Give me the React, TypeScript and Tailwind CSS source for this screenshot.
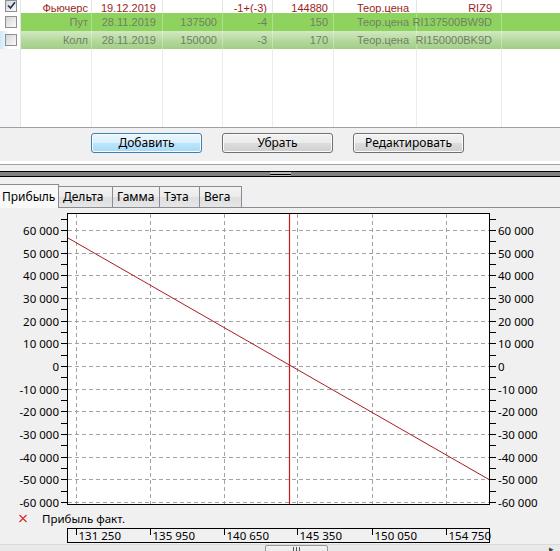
import React from "react";

const COLS = "grid grid-cols-[21px_71px_71px_60px_50px_61px_83px_85px_58px]";
const PADS = ["pr-[3px]", "pr-[6px]", "pr-[5px]", "pr-[5px]", "pr-[5px]", "pr-[7px]", "pr-[9px]", ""];

type Row = { checked: boolean; cells: string[]; kind: "fut" | "green" | "sel" };

const ROWS: Row[] = [
  { checked: true, kind: "fut", cells: ["Фьючерс", "19.12.2019", "", "-1+(-3)", "144880", "Теор.цена", "RIZ9", ""] },
  { checked: false, kind: "green", cells: ["Пут", "28.11.2019", "137500", "-4", "150", "Теор.цена", "RI137500BW9D", ""] },
  { checked: false, kind: "sel", cells: ["Колл", "28.11.2019", "150000", "-3", "170", "Теор.цена", "RI150000BK9D", ""] },
];

function Checkbox({ checked }: { checked?: boolean }) {
  return (
    <div className="w-[12px] h-[12px] border border-[#8e8f8f] bg-gradient-to-br from-[#d6d6d6] to-[#fafafa] flex items-center justify-center">
      {checked && (
        <svg width="9" height="9" viewBox="0 0 9 9">
          <path d="M1 4.5 L3.5 7 L8 1.2" stroke="#243462" strokeWidth="1.7" fill="none" />
        </svg>
      )}
    </div>
  );
}

function TableRow({ row, first }: { row: Row; first?: boolean }) {
  const rowBg =
    row.kind === "fut"
      ? "bg-white text-[#9a1c1c]"
      : row.kind === "green"
      ? "bg-[#8fd35f] text-[#6f7f66]"
      : "bg-[linear-gradient(#d2e9c3,#b6da9e_50%,#a2cd86)] text-[#6f7f66]";
  const cellBorder = row.kind === "fut" ? "border-[#e4e4e4]" : "border-white/30";
  return (
    <div className={`${COLS} h-[18px] shrink-0 ${first ? "mt-[-5px]" : ""}`}>
      <div
        className={`flex items-center pl-[5px] border-r border-[#e4e4e4] ${
          row.kind === "sel" ? "bg-gradient-to-r from-[#cfe8f9] to-white to-50%" : "bg-white"
        }`}
      >
        <Checkbox checked={row.checked} />
      </div>
      {row.cells.map((c, i) => (
        <div
          key={i}
          className={`flex items-center justify-end whitespace-nowrap overflow-visible ${first ? "pt-[5px]" : "pt-[1px]"} ${
            PADS[i]
          } ${rowBg} ${i < 7 ? `border-r ${cellBorder}` : ""}`}
        >
          {c}
        </div>
      ))}
    </div>
  );
}

function Button({ label, def }: { label: string; def?: boolean }) {
  return (
    <div
      className={`w-[111px] h-[20px] rounded-[3px] border flex items-center justify-center text-[12px] text-black shadow-[inset_0_0_0_1px_#fbfbfb] ${
        def
          ? "border-[#3c7fb1] bg-[linear-gradient(#eaf6fd,#d9f0fc_50%,#bee6fd_50%,#a7d9f5)]"
          : "border-[#707070] bg-[linear-gradient(#f2f2f2,#ebebeb_50%,#dddddd_50%,#cfcfcf)]"
      }`}
    >
      {label}
    </div>
  );
}

const fmt = (v: number) => {
  const s = Math.abs(v).toString().replace(/\B(?=(\d{3})+(?!\d))/g, " ");
  return (v < 0 ? "-" : "") + s;
};

function Chart() {
  const yp = (v: number) => Math.round(158 - v * 0.0022667) + 0.5;
  const gx = [76, 150, 224, 297, 372, 446];
  const labels: number[] = [];
  for (let v = 60000; v >= -60000; v -= 10000) labels.push(v);
  const ticks: number[] = [];
  for (let v = -60000; v <= 65000; v += 5000) ticks.push(v);
  const xl = ["131 250", "135 950", "140 650", "145 350", "150 050", "154 750"];
  return (
    <svg width="560" height="336" className="block font-['Noto_Sans',sans-serif] text-[11.5px]">
      <rect x="67.5" y="5.5" width="422" height="291" fill="white" stroke="black" />
      {labels.map((v) => (
        <line key={"h" + v} x1="68" x2="489" y1={yp(v)} y2={yp(v)} stroke="#a3a3a3" strokeDasharray="4 3" />
      ))}
      {gx.map((x) => (
        <line key={"v" + x} x1={x + 0.5} x2={x + 0.5} y1="6" y2="296" stroke="#a3a3a3" strokeDasharray="4 3" />
      ))}
      <line x1="289.5" x2="289.5" y1="6" y2="296" stroke="#cc1a1a" strokeWidth="1.2" />
      <line x1="68" y1="30" x2="489" y2="271.5" stroke="#a81c22" />
      {ticks.map((v) => (
        <g key={"t" + v}>
          <line x1="61" x2="67" y1={yp(v)} y2={yp(v)} stroke="black" />
          <line x1="490" x2="496" y1={yp(v)} y2={yp(v)} stroke="black" />
        </g>
      ))}
      {labels.map((v) => (
        <g key={"l" + v}>
          <text x="59" y={yp(v) + 4} textAnchor="end" fill="black">
            {fmt(v)}
          </text>
          <text x="498" y={yp(v) + 4} fill="black">
            {fmt(v)}
          </text>
        </g>
      ))}
      <path d="M19.5 307 L26.5 314 M26.5 307 L19.5 314" stroke="#d42a2a" strokeWidth="1.1" />
      <text x="42" y="315" fill="black">
        Прибыль факт.
      </text>
      <rect x="67.5" y="320.5" width="422" height="14" fill="none" stroke="black" />
      {gx.map((x, i) => (
        <g key={"x" + x}>
          <line x1={x + 0.5} x2={x + 0.5} y1="320.5" y2="327" stroke="black" />
          <text x={x + 2.5} y="332" fill="black">
            {xl[i]}
          </text>
        </g>
      ))}
    </svg>
  );
}

export default function App() {
  return (
    <div className="w-[560px] h-[551px] overflow-hidden bg-[#f0f0f0] flex flex-col font-['Noto_Sans',sans-serif]">
      {/* table */}
      <div className="h-[128px] shrink-0 bg-white border-b border-[#a0a0a0] flex flex-col overflow-hidden font-['Liberation_Sans',Arial,sans-serif] text-[11px]">
        {ROWS.map((r, i) => (
          <TableRow key={i} row={r} first={i === 0} />
        ))}
        <div className={`${COLS} flex-1`}>
          <div className="bg-[#f5f5f7] border-r border-[#e4e4e4]" />
          {[0, 1, 2, 3, 4, 5, 6, 7].map((i) => (
            <div key={i} className={i < 7 ? "border-r border-[#ececec]" : ""} />
          ))}
        </div>
      </div>
      {/* buttons */}
      <div className="h-[33px] shrink-0 flex pt-[5px] pl-[91px] gap-[20px]">
        <Button label="Добавить" def />
        <Button label="Убрать" />
        <Button label="Редактировать" />
      </div>
      <div className="h-[3px] shrink-0 bg-white" />
      <div className="h-px shrink-0 bg-[#a0a0a0]" />
      <div className="h-[6px] shrink-0" />
      {/* splitter */}
      <div className="h-[6px] shrink-0 border-y border-black bg-[#808080] flex justify-center items-center">
        <div className="w-[21px] h-[4px] bg-[#b8b8b8] flex items-center">
          <div className="w-full h-px bg-black" />
        </div>
      </div>
      <div className="h-[7px] shrink-0" />
      {/* tabs */}
      <div className="h-[23px] shrink-0 flex items-end text-[12px] text-black">
        <div className="w-[59px] h-[24px] -mb-px relative z-10 bg-[#f9f9f9] border-t border-r border-[#898c95] pl-[2px] flex items-center">
          Прибыль
        </div>
        {[
          ["Дельта", "w-[54px]"],
          ["Гамма", "w-[47px]"],
          ["Тэта", "w-[40px]"],
          ["Вега", "w-[42px]"],
        ].map(([t, w]) => (
          <div
            key={t}
            className={`${w} h-[21px] border-t border-r border-[#898c95] bg-[linear-gradient(#f3f3f3,#ebebeb_50%,#dedede_50%,#e6e6e6)] pl-[4px] flex items-center`}
          >
            {t}
          </div>
        ))}
      </div>
      {/* panel */}
      <div className="shrink-0 border-t border-[#898c95]">
        <Chart />
      </div>
      {/* scrollbar */}
      <div className="h-[17px] shrink-0 flex bg-[#e9e9e9] border-t border-[#dadada]">
        <div className="w-[17px] flex items-center justify-center text-[9px] text-[#606060]">◂</div>
        <div className="flex-1 relative">
          <div className="ml-[248px] w-[63px] h-[16px] border border-[#979797] rounded-[2px] bg-gradient-to-b from-[#f3f3f3] to-[#dcdcdc] flex items-start justify-center pt-[1px] gap-[2px]">
            <div className="w-px h-[5px] bg-[#555]" />
            <div className="w-px h-[5px] bg-[#555]" />
            <div className="w-px h-[5px] bg-[#555]" />
          </div>
        </div>
        <div className="w-[17px] flex items-start justify-center text-[9px] text-[#404040] leading-[8px]">▸</div>
      </div>
    </div>
  );
}
